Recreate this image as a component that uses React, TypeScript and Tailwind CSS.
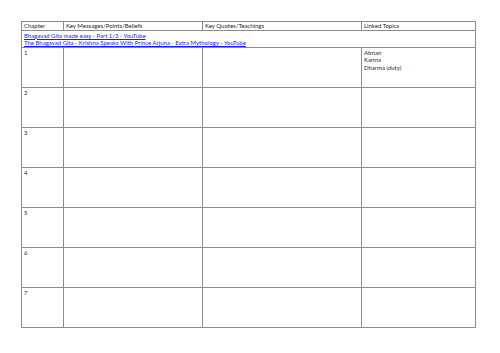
import React from "react";

const rows = ["1", "2", "3", "4", "5", "6", "7"];

export default function App() {
  const cell = "border border-[#8c8c8c] align-top px-[2px] p-0";
  return (
    <div className="w-[500px] h-[353px] bg-white pt-[21px] pl-[21px] antialiased" style={{ fontFamily: "Lato, Carlito, 'Liberation Sans', sans-serif" }}>
      <table className="border-collapse table-fixed w-[454px] text-[6px] leading-[7.6px] text-[#1f1f1f]">
        <colgroup>
          <col className="w-[42px]" />
          <col className="w-[139px]" />
          <col className="w-[159px]" />
          <col className="w-[114px]" />
        </colgroup>
        <tbody>
          <tr className="h-[8px]">
            <td className={cell}>Chapter</td>
            <td className={cell}>Key Messages/Points/Beliefs</td>
            <td className={cell}>Key Quotes/Teachings</td>
            <td className={cell}>Linked Topics</td>
          </tr>
          <tr className="h-[17px]">
            <td className={cell + " pt-[1px]"} colSpan={4}>
              <div className="text-[#1a1aff] underline">Bhagavad Gita made easy - Part 1/3 - YouTube</div>
              <div className="text-[#1a1aff] underline">The Bhagavad Gita - Krishna Speaks With Prince Arjuna - Extra Mythology - YouTube</div>
            </td>
          </tr>
          {rows.map((r, i) => (
            <tr key={r} className="h-[40px]">
              <td className={cell + " pt-[1px]"}>{r}</td>
              <td className={cell}></td>
              <td className={cell}></td>
              <td className={cell + " pt-[1px]"}>
                {i === 0 && (
                  <>
                    <div>Atman</div>
                    <div>Karma</div>
                    <div>Dharma (duty)</div>
                  </>
                )}
              </td>
            </tr>
          ))}
        </tbody>
      </table>
    </div>
  );
}
